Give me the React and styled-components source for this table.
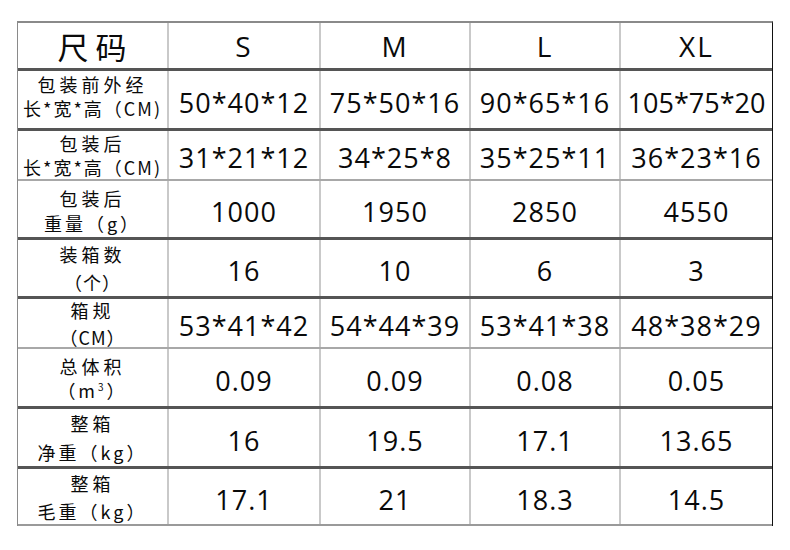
import React from "react";
import styled, { createGlobalStyle } from "styled-components";

const Global = createGlobalStyle`
  html, body { margin: 0; padding: 0; background: #fff; }
  body { font-family: "Open Sans", "Noto Sans CJK SC", sans-serif; color: #0a0a0a; }
`;

const Page = styled.div`
  width: 790px;
  height: 550px;
  padding: 21px 0 0 17px;
  box-sizing: border-box;
  background: #fff;
`;

const Table = styled.div`
  width: 754px;
  border-top: 2px solid #8a8a8a;
  border-left: 1px solid #8a8a8a;
  border-right: 1px solid #111;
  display: flex;
  flex-direction: column;
`;

const Row = styled.div`
  display: grid;
  grid-template-columns: 151px 152px 150px 150px 1fr;
  height: ${(p) => p.$h}px;
  box-sizing: border-box;
  border-bottom: ${(p) =>
    p.$line === "dark" ? "3px solid #555" : p.$line === "end" ? "2px solid #9a9a9a" : "2px solid #a8a8a8"};
`;

const Cell = styled.div`
  display: flex;
  align-items: center;
  justify-content: center;
  border-right: 2px solid #c9c9c9;
  box-sizing: border-box;
  min-width: 0;
  &:last-child { border-right: none; }
`;

const HeadLabel = styled.span`
  font-family: "Noto Sans CJK SC", sans-serif;
  font-size: 31px;
  letter-spacing: 7px;
  margin-left: 6px;
  line-height: 1;
`;

const HeadSize = styled.span`
  font-size: 28px;
  letter-spacing: 2px;
  line-height: 1;
`;

const Label = styled.div`
  display: flex;
  flex-direction: column;
  align-items: center;
  gap: ${(p) => p.$gap}px;
  font-family: "Noto Sans CJK SC", sans-serif;
  font-size: 18px;
  white-space: nowrap;
  margin-top: ${(p) => p.$shift}px;
`;

const Line = styled.span`
  letter-spacing: ${(p) => p.$ls}px;
  line-height: 20px;
`;

const Value = styled.span`
  font-size: 27px;
  line-height: 1;
  padding-top: 5px;
  letter-spacing: ${(p) => (p.$tight ? 0 : 1)}px;
  white-space: nowrap;
`;

const Sup = styled.sup`
  font-size: 10px;
  line-height: 0;
`;

const rows = [
  { h: 60, line: "dark", gap: 4, shift: -8, label: [["包装前外经", 4], ["长*宽*高（CM)", 2]], values: ["50*40*12", "75*50*16", "90*65*16", "105*75*20"] },
  { h: 50, line: "light", gap: 4, shift: 0, label: [["包装后", 4], ["长*宽*高（CM)", 2]], values: ["31*21*12", "34*25*8", "35*25*11", "36*23*16"] },
  { h: 59, line: "dark", gap: 5, shift: 2, label: [["包装后", 4], ["重量（g）", 3]], values: ["1000", "1950", "2850", "4550"] },
  { h: 59, line: "dark", gap: 8, shift: 0, label: [["装箱数", 4], ["（个）", 1]], values: ["16", "10", "6", "3"] },
  { h: 50, line: "light", gap: 7, shift: 0, label: [["箱规", 4], ["（CM）", 1]], values: ["53*41*42", "54*44*39", "53*41*38", "48*38*29"] },
  { h: 60, line: "dark", gap: 4, shift: 0, label: [["总体积", 4], [<>（m<Sup>3</Sup>）</>, 3]], values: ["0.09", "0.09", "0.08", "0.05"] },
  { h: 60, line: "dark", gap: 9, shift: 0, label: [["整箱", 4], ["净重（kg）", 3]], values: ["16", "19.5", "17.1", "13.65"] },
  { h: 57, line: "end", gap: 8, shift: 0, label: [["整箱", 4], ["毛重（kg）", 3]], values: ["17.1", "21", "18.3", "14.5"] },
];

export default function App() {
  return (
    <Page>
      <Global />
      <Table>
        <Row $h={48} $line="dark">
          <Cell><HeadLabel>尺码</HeadLabel></Cell>
          {["S", "M", "L", "XL"].map((s) => (
            <Cell key={s}><HeadSize>{s}</HeadSize></Cell>
          ))}
        </Row>
        {rows.map((r, i) => (
          <Row key={i} $h={r.h} $line={r.line}>
            <Cell>
              <Label $gap={r.gap} $shift={r.shift}>
                {r.label.map(([t, ls], j) => (
                  <Line key={j} $ls={ls}>{t}</Line>
                ))}
              </Label>
            </Cell>
            {r.values.map((v, j) => (
              <Cell key={j}><Value $tight={v.length > 8}>{v}</Value></Cell>
            ))}
          </Row>
        ))}
      </Table>
    </Page>
  );
}
